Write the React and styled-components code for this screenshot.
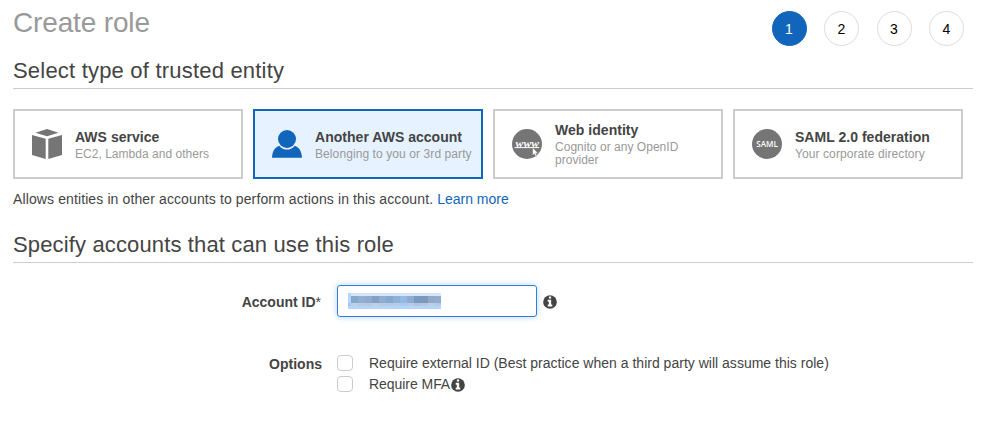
import React from "react";
import styled, { createGlobalStyle } from "styled-components";

const GlobalStyle = createGlobalStyle`
  * { box-sizing: border-box; }
  body {
    margin: 0;
    background: #fff;
    color: #444;
    font-family: "Liberation Sans", Arial, sans-serif;
    font-size: 14px;
    overflow: hidden;
  }
`;

const Page = styled.main`
  width: 960px;
  margin-left: 13px;
`;

const Header = styled.header`
  display: flex;
  justify-content: space-between;
  height: 54px;
`;

const Title = styled.h1`
  margin: 6px 0 0;
  font-size: 28px;
  line-height: 34px;
  font-weight: 400;
  letter-spacing: -0.15px;
  color: #999;
`;

const Steps = styled.ol`
  display: flex;
  gap: 17.5px;
  margin: 11px 9px 0 0;
  padding: 0;
  list-style: none;
`;

const Step = styled.li`
  display: grid;
  place-items: center;
  width: 35px;
  height: 35px;
  border: 1px solid ${(p) => (p.$active ? "#1166bb" : "#ddd")};
  border-radius: 50%;
  background: ${(p) => (p.$active ? "#1166bb" : "#fff")};
  color: ${(p) => (p.$active ? "#fff" : "#000")};
`;

const SectionTitle = styled.h2`
  height: 35px;
  margin: 0;
  padding-top: 3px;
  border-bottom: 1px solid #ccc;
  font-size: 22px;
  line-height: 28px;
  font-weight: 400;
  letter-spacing: ${(p) => p.$spacing};
`;

const Cards = styled.div`
  display: flex;
  gap: 10px;
  margin-top: 20px;
`;

const Card = styled.div`
  display: flex;
  align-items: center;
  gap: 13px;
  width: 230px;
  height: 70px;
  padding-left: 17px;
  border: 2px solid ${(p) => (p.$selected ? "#1166bb" : "#ccc")};
  background: ${(p) => (p.$selected ? "#e6f2ff" : "#fff")};
`;

const CardIcon = styled.svg`
  flex: none;
  width: 30px;
  height: 30px;
`;

const CardText = styled.div`
  width: 160px;
`;

const CardTitle = styled.div`
  padding-bottom: 2px;
  font-size: 14px;
  line-height: 18px;
  font-weight: 700;
  white-space: nowrap;
  letter-spacing: 0.03px;
`;

const CardDescription = styled.div`
  font-size: 12px;
  line-height: 13px;
  color: #999;
  letter-spacing: ${(p) => p.$spacing};
`;

const Hint = styled.p`
  height: 39px;
  margin: 10px 0 0;
  line-height: 20px;
  letter-spacing: 0.112px;
`;

const Link = styled.a`
  color: #1166bb;
  letter-spacing: 0;
`;

const Form = styled.div`
  display: grid;
  grid-template-columns: 309px 1fr;
  column-gap: 15px;
  row-gap: 35px;
  margin-top: 22px;
`;

const Label = styled.div`
  padding-top: ${(p) => p.$top};
  text-align: right;
  font-weight: 700;
  line-height: 16px;
`;

const RequiredMark = styled.span`
  margin-right: 1px;
  font-weight: 400;
`;

const Field = styled.div`
  display: flex;
  align-items: center;
  gap: 6px;
`;

const Input = styled.div`
  width: 200px;
  height: 32px;
  padding: 7px 0 0 10px;
  border: 1px solid #2e7fd9;
  border-radius: 3px;
  box-shadow: 0 0 6px rgba(46, 138, 230, 0.35);
`;

const Selection = styled.div`
  display: grid;
  grid-template-columns: 3px repeat(12, 7px) 6px;
  grid-template-rows: 3px 7px 3px;
  width: 93px;
  height: 16px;
  background: #b4d5fe;
`;

const Block = styled.span`
  background: ${(p) => p.$color};
`;

const Options = styled.div`
  display: flex;
  flex-direction: column;
  gap: 5px;
  padding-top: 3px;
`;

const Option = styled.div`
  display: flex;
  align-items: center;
  height: 16px;
  white-space: nowrap;
`;

const Checkbox = styled.span`
  width: 16px;
  height: 16px;
  margin-right: 16px;
  border: 1px solid #ccc;
  border-radius: 4px;
`;

const OptionText = styled.span`
  line-height: 16px;
  letter-spacing: ${(p) => p.$spacing};
`;

const InfoSvg = styled.svg`
  width: 14px;
  height: 14px;
  margin-top: 2px;
  margin-left: ${(p) => (p.$inline ? "1px" : "0")};
`;

const InfoIcon = ({ inline }) => (
  <InfoSvg $inline={inline} viewBox="112 112 1568 1568">
    <circle cx="896" cy="896" r="768" fill="#444" />
    <path
      fill="#fff"
      d="M1152 1376v-160q0-14-9-23t-23-9h-96V672q0-14-9-23t-23-9H672q-14 0-23 9t-9 23v160q0 14 9 23t23 9h96v320h-96q-14 0-23 9t-9 23v160q0 14 9 23t23 9h448q14 0 23-9t9-23zM1024 480V320q0-14-9-23t-23-9H800q-14 0-23 9t-9 23v160q0 14 9 23t23 9h192q14 0 23-9t9-23z"
    />
  </InfoSvg>
);

const CubeIcon = () => (
  <CardIcon viewBox="0 0 30 30" fill="#757575">
    <path d="M15 0 26.5 3.8 15 7.3 3.5 3.8Z" />
    <path d="M0 6 13.7 9.7V30L0 26Z" />
    <path d="M30 6 16.3 9.7V30L30 26Z" />
  </CardIcon>
);

const PersonIcon = () => (
  <CardIcon viewBox="0 0 30 30" fill="#1166bb">
    <circle cx="15" cy="10" r="9" />
    <path d="M0 28.7C.3 22.5 2.7 18.2 7.2 16.7Q10.6 20.6 15 20.6T22.8 16.7C27.3 18.2 29.7 22.5 30 28.7Z" />
  </CardIcon>
);

const WebIcon = () => (
  <CardIcon viewBox="0 0 30 30">
    <circle cx="15" cy="15" r="15" fill="#757575" />
    <text
      x="3.6"
      y="17.6"
      textLength="23.4"
      lengthAdjust="spacingAndGlyphs"
      fontFamily="Liberation Serif, serif"
      fontSize="10.5"
      fontStyle="italic"
      fontWeight="700"
      fill="#fff"
    >
      www
    </text>
    <path d="M2.6 18.6H27.4" stroke="#fff" strokeWidth="1" />
    <path
      d="M20.7 18.8V26.2L22.4 24.7 23.8 27.6 25 27 23.7 24.2H26Z"
      fill="#fff"
      stroke="#757575"
      strokeWidth=".3"
    />
  </CardIcon>
);

const SamlIcon = () => (
  <CardIcon viewBox="0 0 30 30">
    <circle cx="15" cy="15" r="15" fill="#757575" />
    <text
      x="15"
      y="18"
      textAnchor="middle"
      textLength="21.5"
      lengthAdjust="spacingAndGlyphs"
      fontFamily="Open Sans, sans-serif"
      fontSize="8"
      fontWeight="600"
      fill="#fff"
    >
      SAML
    </text>
  </CardIcon>
);

const entities = [
  { title: "AWS service", text: "EC2, Lambda and others", spacing: "0.03px", Icon: CubeIcon },
  { title: "Another AWS account", text: "Belonging to you or 3rd party", spacing: "0.09px", Icon: PersonIcon, selected: true },
  { title: "Web identity", text: "Cognito or any OpenID provider", spacing: "0.03px", Icon: WebIcon },
  { title: "SAML 2.0 federation", text: "Your corporate directory", spacing: "0.09px", Icon: SamlIcon },
];

const maskRows = [
  ["#b4d5fe", ...Array(12).fill("#d5e6f9"), "#d5e6f9"],
  ["#b4d5fe", "#86a8ce", "#93aed0", "#8fabcf", "#86a0c4", "#90accf", "#86a7cf", "#8fb0d8", "#94b7e3", "#90accf", "#7b9ac2", "#7f98ba", "#91aac9", "#93add0"],
  ["#a5c5ed", "#bdd0e5", "#b9cbdf", "#b3cae5", "#bfd0e2", "#b5cbe4", "#b4cbe4", "#b8cde5", "#a9c9ef", "#b7cbe2", "#adc5e2", "#b4c8df", "#bfcfdf", "#b4c9e3"],
];

export default function App() {
  return (
    <>
      <GlobalStyle />
      <Page>
        <Header>
          <Title>Create role</Title>
          <Steps>
            {[1, 2, 3, 4].map((n) => (
              <Step key={n} $active={n === 1}>{n}</Step>
            ))}
          </Steps>
        </Header>
        <SectionTitle $spacing="0.2px">Select type of trusted entity</SectionTitle>
        <Cards>
          {entities.map(({ title, text, spacing, Icon, selected }) => (
            <Card key={title} $selected={selected}>
              <Icon />
              <CardText>
                <CardTitle>{title}</CardTitle>
                <CardDescription $spacing={spacing}>{text}</CardDescription>
              </CardText>
            </Card>
          ))}
        </Cards>
        <Hint>
          Allows entities in other accounts to perform actions in this account. <Link>Learn more</Link>
        </Hint>
        <SectionTitle $spacing="0.14px">Specify accounts that can use this role</SectionTitle>
        <Form>
          <Label $top="9px">
            Account ID<RequiredMark>*</RequiredMark>
          </Label>
          <Field>
            <Input>
              <Selection>
                {maskRows.flat().map((color, i) => (
                  <Block key={i} $color={color} />
                ))}
              </Selection>
            </Input>
            <InfoIcon />
          </Field>
          <Label $top="4px">Options</Label>
          <Options>
            <Option>
              <Checkbox />
              <OptionText $spacing="0.01px">
                Require external ID (Best practice when a third party will assume this role)
              </OptionText>
            </Option>
            <Option>
              <Checkbox />
              <OptionText $spacing="-0.05px">Require MFA</OptionText>
              <InfoIcon inline />
            </Option>
          </Options>
        </Form>
      </Page>
    </>
  );
}
